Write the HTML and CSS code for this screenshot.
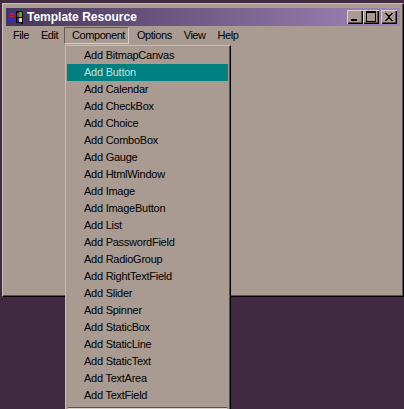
FILE: index.html
```html
<!DOCTYPE html>
<html lang="en">
<head>
<meta charset="utf-8">
<title>Template Resource</title>
<link rel="stylesheet" href="styles.css">
</head>
<body>
<div class="window">
  <div class="titlebar">
    <svg class="appicon" width="16" height="14" viewBox="0 0 16 14" shape-rendering="crispEdges">
      <path d="M0 2h2v1H0zM3 2h2v1H3zM0 5h2v1H0zM3 8h2v1H3zM0 10h2v1H0zM3 11h2v1H3zM6 4h1v1H6zM6 9h1v1H6z" fill="#2a2ae8"/>
      <path d="M2 3h4v2H2zM1 6h5v1H1z" fill="#d81818"/>
      <path d="M1 8h2v2H1zM4 9h2v2H4zM2 12h1v1H2z" fill="#2a2ae8"/>
      <path d="M8 1h6v1h1v12h-2v-1H8z" fill="#000"/>
      <rect x="9" y="3" width="2" height="4" fill="#e02020"/>
      <rect x="11" y="2" width="3" height="5" fill="#20c820"/>
      <rect x="9" y="8" width="2" height="4" fill="#2020e0"/>
      <rect x="11" y="8" width="3" height="4" fill="#f0e820"/>
    </svg>
    <span class="title">Template Resource</span>
    <div class="controls">
      <button class="ctl" aria-label="Minimize"><svg width="16" height="14" viewBox="0 0 16 14" shape-rendering="crispEdges"><rect x="4" y="9" width="6" height="2" fill="#000"/></svg></button>
      <button class="ctl" aria-label="Maximize"><svg width="16" height="14" viewBox="0 0 16 14" shape-rendering="crispEdges"><path d="M3 1h10v2H3zM3 3h1v9H3zM12 3h1v9h-1zM3 11h10v1H3z" fill="#000"/></svg></button>
      <button class="ctl ctl-close" aria-label="Close"><svg width="16" height="14" viewBox="0 0 16 14" shape-rendering="crispEdges"><path d="M4 3h2v1h1v1h2V4h1V3h2v1h-1v1h-1v1H9v2h1v1h1v1h1v1h-2v-1H9V9H7v1H6v1H4v-1h1V9h1V8h1V6H6V5H5V4H4z" fill="#000"/></svg></button>
    </div>
  </div>
  <div class="menubar">
    <span class="menu-item">File</span>
    <span class="menu-item">Edit</span>
    <span class="menu-item menu-open">Component</span>
    <span class="menu-item">Options</span>
    <span class="menu-item">View</span>
    <span class="menu-item">Help</span>
  </div>
</div>
<ul class="dropdown">
  <li>Add BitmapCanvas</li>
  <li class="selected">Add Button</li>
  <li>Add Calendar</li>
  <li>Add CheckBox</li>
  <li>Add Choice</li>
  <li>Add ComboBox</li>
  <li>Add Gauge</li>
  <li>Add HtmlWindow</li>
  <li>Add Image</li>
  <li>Add ImageButton</li>
  <li>Add List</li>
  <li>Add PasswordField</li>
  <li>Add RadioGroup</li>
  <li>Add RightTextField</li>
  <li>Add Slider</li>
  <li>Add Spinner</li>
  <li>Add StaticBox</li>
  <li>Add StaticLine</li>
  <li>Add StaticText</li>
  <li>Add TextArea</li>
  <li>Add TextField</li>
  <li class="separator" role="separator"></li>
</ul>
</body>
</html>
```

FILE: styles.css
```css
* { box-sizing: border-box; }

html, body {
  margin: 0;
  height: 100%;
  overflow: hidden;
}

body {
  background: #412941;
  font-family: "Liberation Sans", Arial, sans-serif;
  font-size: 11px;
  letter-spacing: -0.25px;
  color: #000;
  position: relative;
}

.window {
  position: absolute;
  left: 2px;
  top: 3px;
  width: 402px;
  height: 294px;
  background: #a99b91;
  border: 1px solid;
  border-color: #c9beb6 #000 #000 #c9beb6;
  box-shadow: inset -1px -1px 0 #5c504a;
  padding: 4px 3px 3px;
}

.titlebar {
  height: 18px;
  background: linear-gradient(to right, #443658 0%, #a284b8 100%);
  display: flex;
  align-items: center;
  padding-left: 2px;
  padding-right: 3px;
}

.appicon { flex: none; }

.title {
  margin-left: 3px;
  color: #fff;
  font-weight: bold;
  font-size: 12px;
  letter-spacing: 0;
}

.controls {
  margin-left: auto;
  display: flex;
}

.ctl {
  width: 16px;
  height: 14px;
  padding: 0;
  border: 0;
  background: #a99b91;
  box-shadow: inset 1px 1px 0 #d8cfc8, inset -1px -1px 0 #000, inset -2px -2px 0 #5c504a;
  display: block;
}

.ctl svg { display: block; }

.ctl-close { margin-left: 2px; }

.menubar {
  display: flex;
  align-items: flex-start;
  margin-top: 1px;
  padding-left: 1px;
  letter-spacing: -0.45px;
}

.menu-item {
  padding: 0 6px 0 5px;
  line-height: 17px;
  height: 17px;
  margin-left: 1px;
}

.menu-open {
  margin-left: 0;
  margin-right: 2px;
  border: 1px solid;
  border-color: #6a5c54 #d8cfc8 #d8cfc8 #6a5c54;
  line-height: 15px;
  padding: 0 3px 0 7px;
}

.dropdown {
  position: absolute;
  left: 65px;
  top: 45px;
  width: 166px;
  height: 370px;
  margin: 0;
  padding: 1px 2px 1px 1px;
  list-style: none;
  background: #a99b91;
  border: 1px solid;
  border-color: #c9beb6 #000 #000 #c9beb6;
  box-shadow: inset -1px -1px 0 #5c504a;
}

.dropdown li {
  height: 17px;
  line-height: 16px;
  padding-left: 17px;
  white-space: nowrap;
}

.dropdown .selected {
  background: #008080;
  color: #bfe0d8;
}

.dropdown .separator {
  height: 2px;
  margin: 3px 1px 0;
  padding: 0;
  border-top: 1px solid #5c504a;
  border-bottom: 1px solid #d8cfc8;
}
```
